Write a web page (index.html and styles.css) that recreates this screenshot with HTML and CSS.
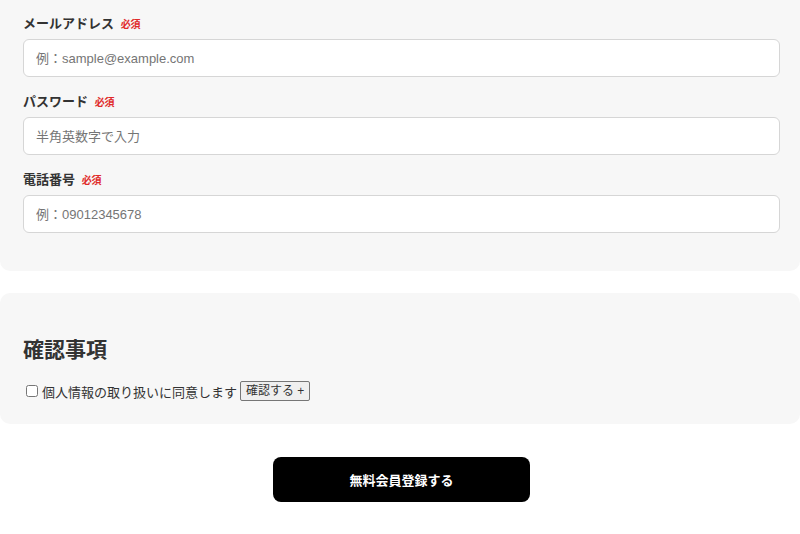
FILE: index.html
```html
<!DOCTYPE html>
<html lang="ja">
<head>
  <meta charset="UTF-8" />
  <meta name="viewport" content="width=device-width, initial-scale=1.0" />
  <title>無料会員登録</title>
  <link rel="stylesheet" href="styles.css">
</head>
<body>
  <form class="signup-form">
    <div class="form-card">
      <div class="field">
        <label for="email">メールアドレス <span class="required">必須</span></label>
        <input type="email" id="email" placeholder="例：sample@example.com" autocomplete="off" />
      </div>
      <div class="field">
        <label for="password">パスワード <span class="required">必須</span></label>
        <input type="password" id="password" placeholder="半角英数字で入力" autocomplete="off" />
      </div>
      <div class="field">
        <label for="tel">電話番号 <span class="required">必須</span></label>
        <input type="tel" id="tel" placeholder="例：09012345678" autocomplete="off" />
      </div>
    </div>

    <div class="form-card confirm-card">
      <h2>確認事項</h2>
      <div class="agree-row">
        <input type="checkbox" id="agree" />
        <label for="agree">個人情報の取り扱いに同意します</label>
        <button type="button" class="toggle-button">確認する +</button>
      </div>
    </div>

    <div class="submit-wrap">
      <button type="submit" class="submit-button">無料会員登録する</button>
    </div>
  </form>
</body>
</html>
```

FILE: styles.css
```css
* { box-sizing: border-box; margin: 0; padding: 0; }
body {
  font-family: "Liberation Sans", "Noto Sans CJK JP", sans-serif;
  background: #fff;
  color: #333;
}
.form-card {
  background: #f7f7f7;
  border-radius: 0 0 10px 10px;
  padding: 14px 20px 38px 23px;
  display: flex;
  flex-direction: column;
  gap: 15px;
}
.field {
  display: flex;
  flex-direction: column;
  gap: 5px;
}
.field label {
  display: block;
  height: 20px;
  font-size: 13px;
  font-weight: bold;
  line-height: 20px;
  color: #333;
}
.required {
  color: #e02a2a;
  font-size: 10px;
  margin-left: 3px;
}
.field input {
  width: 100%;
  height: 38px;
  padding: 0 12px;
  border: 1px solid #d6d6d6;
  border-radius: 6px;
  background: #fff;
  font-family: inherit;
  font-size: 13px;
  color: #333;
}
.field input::placeholder {
  color: #757575;
}
.field input:focus {
  outline: none;
  border-color: #999;
}
.confirm-card {
  margin-top: 22px;
  border-radius: 10px;
  padding: 42px 20px 23px 23px;
  gap: 16px;
}
.confirm-card h2 {
  height: 30px;
  font-size: 21px;
  line-height: 30px;
  font-weight: bold;
  color: #333;
}
.agree-row {
  display: flex;
  align-items: center;
  height: 20px;
  font-size: 13px;
  color: #333;
  padding-left: 3px;
}
.agree-row input[type="checkbox"] {
  width: 12px;
  height: 12px;
  margin: 0 4px 0 0;
}
.toggle-button {
  height: 20px;
  margin-left: 3px;
  font-family: inherit;
  font-size: 12px;
  line-height: 16px;
  padding: 1px 5px;
  border: 1px solid #767676;
  border-radius: 2px;
  background: #efefef;
  color: #333;
  cursor: pointer;
}
.submit-wrap {
  display: flex;
  justify-content: center;
  margin-top: 33px;
}
.submit-button {
  width: 257px;
  height: 45px;
  margin-left: 3px;
  background: #000;
  color: #fff;
  border: none;
  border-radius: 8px;
  font-family: inherit;
  font-size: 13px;
  font-weight: bold;
  cursor: pointer;
}
```
